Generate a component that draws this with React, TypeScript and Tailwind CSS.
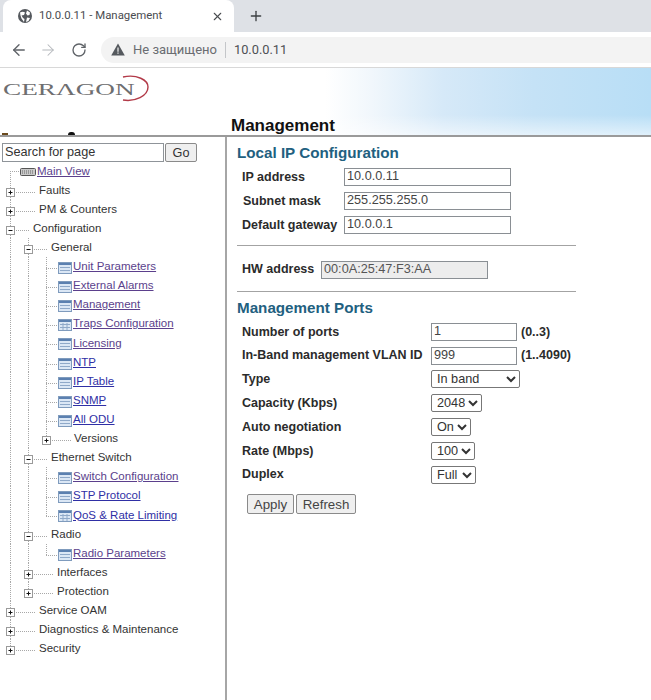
import { ArrowLeft, ArrowRight, Plus, RotateCw, X } from "lucide-react";

type Node = {
  label: string;
  cx: number;
  textX: number;
  kind: "plus" | "minus" | "leaf" | "table" | "root";
  through?: number[];
  pos?: "first" | "last";
  visited?: boolean;
};

const tree: Node[] = [
  { label: "Main View", cx: 10, textX: 37, kind: "root", pos: "first", visited: true },
  { label: "Faults", cx: 10, textX: 39, kind: "plus" },
  { label: "PM & Counters", cx: 10, textX: 39, kind: "plus" },
  { label: "Configuration", cx: 10, textX: 33, kind: "minus" },
  { label: "General", cx: 28, textX: 51, kind: "minus", through: [10] },
  { label: "Unit Parameters", cx: 46, textX: 73, kind: "leaf", through: [10, 28], visited: true },
  { label: "External Alarms", cx: 46, textX: 73, kind: "leaf", through: [10, 28], visited: true },
  { label: "Management", cx: 46, textX: 73, kind: "leaf", through: [10, 28], visited: true },
  { label: "Traps Configuration", cx: 46, textX: 73, kind: "table", through: [10, 28], visited: true },
  { label: "Licensing", cx: 46, textX: 73, kind: "leaf", through: [10, 28], visited: true },
  { label: "NTP", cx: 46, textX: 73, kind: "leaf", through: [10, 28] },
  { label: "IP Table", cx: 46, textX: 73, kind: "leaf", through: [10, 28] },
  { label: "SNMP", cx: 46, textX: 73, kind: "leaf", through: [10, 28] },
  { label: "All ODU", cx: 46, textX: 73, kind: "leaf", through: [10, 28] },
  { label: "Versions", cx: 46, textX: 74, kind: "plus", through: [10, 28], pos: "last" },
  { label: "Ethernet Switch", cx: 28, textX: 51, kind: "minus", through: [10] },
  { label: "Switch Configuration", cx: 46, textX: 73, kind: "leaf", through: [10, 28], visited: true },
  { label: "STP Protocol", cx: 46, textX: 73, kind: "leaf", through: [10, 28] },
  { label: "QoS & Rate Limiting", cx: 46, textX: 73, kind: "table", through: [10, 28], pos: "last" },
  { label: "Radio", cx: 28, textX: 51, kind: "minus", through: [10] },
  { label: "Radio Parameters", cx: 46, textX: 73, kind: "leaf", through: [10, 28], pos: "last", visited: true },
  { label: "Interfaces", cx: 28, textX: 57, kind: "plus", through: [10] },
  { label: "Protection", cx: 28, textX: 57, kind: "plus", through: [10], pos: "last" },
  { label: "Service OAM", cx: 10, textX: 39, kind: "plus" },
  { label: "Diagnostics & Maintenance", cx: 10, textX: 39, kind: "plus" },
  { label: "Security", cx: 10, textX: 39, kind: "plus", pos: "last" },
];

const DOT = "#a8a8a8";

function PageIcon({ grid }: { grid: boolean }) {
  return (
    <g>
      <rect x="58.5" y="5.5" width="13" height="11" fill="#dbe7f5" stroke="#7f9bbd" />
      <rect x="59" y="6" width="12" height="2" fill="#5b80b0" />
      <path d="M60 10.5h10M60 13.5h10" stroke="#8fa9c9" />
      {grid && <path d="M63 9v7M67 9v7" stroke="#8fa9c9" />}
    </g>
  );
}

function Connector({ node }: { node: Node }) {
  const { cx, kind, pos } = node;
  const isBranch = kind === "plus" || kind === "minus";
  const lineEnd = node.textX - (kind === "leaf" || kind === "table" ? 15 : 3);
  return (
    <svg width={node.textX} height={19.12} className="shrink-0">
      {(node.through ?? []).map((x) => (
        <line key={x} x1={x + 0.5} y1={0} x2={x + 0.5} y2={20} stroke={DOT} strokeDasharray="1 1" />
      ))}
      <line
        x1={cx + 0.5}
        y1={pos === "first" ? 9 : 0}
        x2={cx + 0.5}
        y2={pos === "last" ? 11 : 20}
        stroke={DOT}
        strokeDasharray="1 1"
      />
      {kind === "root" ? (
        <g>
          <line x1={cx} y1={9.5} x2={20} y2={9.5} stroke={DOT} strokeDasharray="1 1" />
          <rect x="20.5" y="6.5" width="15" height="7" rx="1" fill="#c9c9c9" stroke="#555" />
          <path d="M22 9h12M22 11h12" stroke="#666" strokeDasharray="1 1" />
        </g>
      ) : (
        <line x1={cx} y1={11.5} x2={lineEnd} y2={11.5} stroke={DOT} strokeDasharray="1 1" />
      )}
      {isBranch && (
        <g>
          <rect x={cx - 3.5} y={7.5} width={8} height={8} fill="#fff" stroke="#9a9a9a" />
          <path d={`M${cx - 1.5} 11.5h4`} stroke="#111" />
          {kind === "plus" && <path d={`M${cx + 0.5} 9.5v4`} stroke="#111" />}
        </g>
      )}
      {(kind === "leaf" || kind === "table") && <PageIcon grid={kind === "table"} />}
    </svg>
  );
}

function TreeRow({ node }: { node: Node }) {
  const isLink = node.kind === "leaf" || node.kind === "table" || node.kind === "root";
  return (
    <div className="flex h-[19.12px] items-center">
      <Connector node={node} />
      {isLink ? (
        <a
          href="#"
          className={`text-[11.5px] leading-[19px] underline ${
            node.visited ? "text-[#5b3f8c]" : "text-[#2f2fa5]"
          }`}
        >
          {node.label}
        </a>
      ) : (
        <span className="text-[11.5px] leading-[19px] text-[#333]">{node.label}</span>
      )}
    </div>
  );
}

function Field({ value, className }: { value: string; className: string }) {
  return (
    <input
      readOnly
      value={value}
      className={`h-[18px] border border-[#8a8f94] bg-white px-[2px] text-[12.7px] text-[#444] outline-none ${className}`}
    />
  );
}

function IpRow({ label, value, labelClass = "" }: { label: string; value: string; labelClass?: string }) {
  return (
    <div className="flex h-[24px] items-center">
      <span className={`w-[102px] text-[12.5px] font-bold text-[#2b2b2b] ${labelClass}`}>{label}</span>
      <Field value={value} className="w-[167px]" />
    </div>
  );
}

function PortRow({ label, children }: { label: string; children: React.ReactNode }) {
  return (
    <div className="flex h-[23.8px] items-center">
      <span className="w-[189px] text-[12.5px] font-bold whitespace-nowrap text-[#2b2b2b]">{label}</span>
      {children}
    </div>
  );
}

function Select({ value, className }: { value: string; className: string }) {
  return (
    <select
      defaultValue={value}
      className={`h-[18px] rounded-[2px] border border-[#777] bg-white pl-[1px] text-[12.7px] text-[#333] ${className}`}
    >
      <option>{value}</option>
    </select>
  );
}

export default function App() {
  return (
    <div className="flex h-[700px] w-[651px] flex-col overflow-hidden bg-white font-['Liberation_Sans',Arial,sans-serif]">
      {/* browser tab strip */}
      <div className="flex h-[32px] shrink-0 items-center bg-[#dee1e6] pl-[3px]">
        <div className="flex h-[32px] w-[231px] items-center rounded-t-[8px] bg-white pr-[10px] pl-[14px]">
          <svg width="16" height="16" viewBox="0 0 16 16" className="shrink-0">
            <circle cx="8" cy="8" r="7" fill="#55595e" />
            <path
              d="M3 4.5c2-1 3.5-1 5 0l-1 2.5-2.5.5L6 10l1.5 1-.5 3-2.5-3.5-1-3zM10 2.5l3 2-.5 2.5-2 .5-1.5-2zM10 9.5l3 .5-1.5 3-2.5 1z"
              fill="#fff"
            />
          </svg>
          <span className="ml-[6px] flex-1 font-['Roboto',sans-serif] text-[11.4px] text-[#4a4c50]">
            10.0.0.11 - Management
          </span>
          <X size={13} strokeWidth={2} className="text-[#4a4c50]" />
        </div>
        <Plus size={16} strokeWidth={2} className="ml-[14px] text-[#3c4043]" />
      </div>

      {/* address bar */}
      <div className="flex h-[36px] shrink-0 items-center border-b border-[#d8d8d8] bg-white pl-[10px]">
        <ArrowLeft size={18} strokeWidth={1.8} className="text-[#5f6368]" />
        <ArrowRight size={18} strokeWidth={1.4} className="ml-[11px] text-[#b4b7bb]" />
        <RotateCw size={16} strokeWidth={2} className="ml-[14px] text-[#5f6368]" />
        <div className="ml-[14px] flex h-[26px] flex-1 items-center rounded-l-full bg-[#f3f3f3] pl-[10px] font-['Roboto',sans-serif] text-[13px]">
          <svg width="14" height="13" viewBox="0 0 14 13" className="shrink-0">
            <path d="M7 .5 13.8 12.5H.2z" fill="#55595e" />
            <path d="M6.4 4.5h1.2v4.2H6.4zM6.4 9.6h1.2v1.2H6.4z" fill="#f3f3f3" />
          </svg>
          <span className="ml-[8px] text-[#6a6d71]">Не защищено</span>
          <span className="ml-[8px] h-[16px] w-px bg-[#c4c6c9]" />
          <span className="ml-[8px] text-[12.8px] text-[#4e5054]">10.0.0.11</span>
        </div>
      </div>

      {/* page banner */}
      <div className="relative flex h-[69px] shrink-0 border-b-2 border-[#9a9a9a] bg-[linear-gradient(180deg,transparent_70%,rgba(255,255,255,0.55)_100%),linear-gradient(90deg,#ffffff_50%,#f1f7fc_57%,#d6e9f8_68%,#c5e2f6_82%,#b8def6_100%)]">
        <div className="relative mt-[10px] ml-[3px] h-[24px] w-[228px] shrink-0">
          <span className="inline-block origin-left scale-x-[1.65] font-['Liberation_Serif',serif] text-[16.5px] leading-[24px] text-[#6e6e70]">
            CERΛGON
          </span>
          <svg width="40" height="30" viewBox="0 0 40 30" className="absolute top-[-3px] left-[112px]">
            <path d="M8 2C22-1 33 5 33 12 33 21 20 27 8 25" fill="none" stroke="#b23a48" strokeWidth="1.4" />
          </svg>
        </div>
        <h1 className="self-end text-[17px] leading-[18px] font-bold text-[#111]">Management</h1>
        <span className="absolute bottom-0 left-[2px] h-[2px] w-[6px] bg-[#6b4a1e]" />
        <span className="absolute bottom-0 left-[68px] h-[3px] w-[7px] rounded-t-full bg-[#111]" />
      </div>

      <div className="flex min-h-0 flex-1">
        {/* navigation tree */}
        <aside className="w-[227px] shrink-0 border-r-2 border-[#a6a6a6] pt-[6px]">
          <div className="flex h-[18.5px] items-start pl-[2px]">
            <input
              readOnly
              value="Search for page"
              className="h-[19px] w-[162px] border border-[#8f9499] bg-white px-[2px] text-[12.7px] text-[#333] outline-none"
            />
            <button className="ml-[1px] h-[19px] w-[32px] rounded-[2px] border border-[#8a8a8a] bg-[#efefef] text-[12.7px] text-[#333]">
              Go
            </button>
          </div>
          {tree.map((node) => (
            <TreeRow key={node.label} node={node} />
          ))}
        </aside>

        {/* form */}
        <main className="flex-1 pt-[6px] pl-[10px]">
          <h2 className="text-[15.2px] leading-[20px] font-bold text-[#22607f]">Local IP Configuration</h2>
          <div className="mt-[2px] pl-[5px]">
            <IpRow label="IP address" value="10.0.0.11" />
            <IpRow label="Subnet mask" value="255.255.255.0" labelClass="pl-px" />
            <IpRow label="Default gateway" value="10.0.0.1" />
          </div>
          <div className="mt-[8px] h-px w-[339px] bg-[#a3a3a3]" />
          <div className="mt-[14px] flex h-[19px] items-center pl-[5px]">
            <span className="w-[79px] text-[12.5px] font-bold text-[#2b2b2b]">HW address</span>
            <input
              readOnly
              value="00:0A:25:47:F3:AA"
              className="h-[18px] w-[167px] border border-[#8a8f94] bg-[#ededed] px-[2px] text-[12.7px] text-[#555] outline-none"
            />
          </div>
          <div className="mt-[12px] h-px w-[339px] bg-[#a3a3a3]" />
          <h2 className="mt-[6px] text-[15.2px] leading-[20px] font-bold text-[#22607f]">Management Ports</h2>
          <div className="mt-[2px] pl-[5px]">
            <PortRow label="Number of ports">
              <Field value="1" className="w-[86px]" />
              <span className="ml-[4px] text-[12.5px] font-bold text-[#2b2b2b]">(0..3)</span>
            </PortRow>
            <PortRow label="In-Band management VLAN ID">
              <Field value="999" className="w-[86px]" />
              <span className="ml-[4px] text-[12.5px] font-bold text-[#2b2b2b]">(1..4090)</span>
            </PortRow>
            <PortRow label="Type">
              <Select value="In band" className="w-[89px]" />
            </PortRow>
            <PortRow label="Capacity (Kbps)">
              <Select value="2048" className="w-[51px]" />
            </PortRow>
            <PortRow label="Auto negotiation">
              <Select value="On" className="w-[40px]" />
            </PortRow>
            <PortRow label="Rate (Mbps)">
              <Select value="100" className="w-[44px]" />
            </PortRow>
            <PortRow label="Duplex">
              <Select value="Full" className="w-[45px]" />
            </PortRow>
          </div>
          <div className="mt-[7px] flex gap-[2px] pl-[10px]">
            <button className="h-[20px] w-[47px] rounded-[2px] border border-[#8a8a8a] bg-[#efefef] text-[13.3px] text-[#444]">
              Apply
            </button>
            <button className="h-[20px] w-[60px] rounded-[2px] border border-[#8a8a8a] bg-[#efefef] text-[13.3px] text-[#444]">
              Refresh
            </button>
          </div>
        </main>
      </div>
    </div>
  );
}
